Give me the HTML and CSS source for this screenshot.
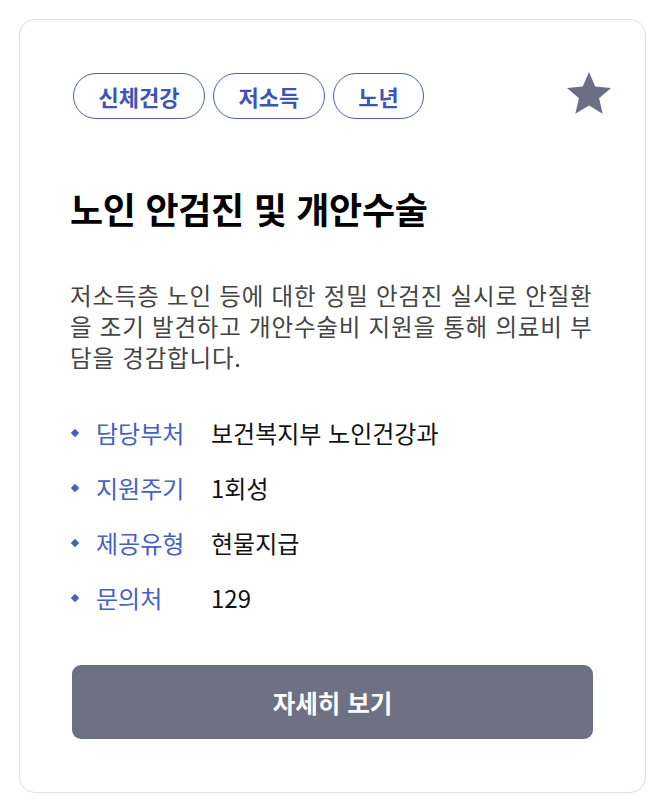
FILE: index.html
```html
<!DOCTYPE html>
<html lang="ko">
<head>
<meta charset="utf-8">
<link rel="stylesheet" href="styles.css">
</head>
<body>
<div class="page">
  <article class="card">
    <div class="card-head">
      <ul class="tags">
        <li class="tag">신체건강</li>
        <li class="tag">저소득</li>
        <li class="tag">노년</li>
      </ul>
      <button class="fav" aria-label="즐겨찾기">
        <svg viewBox="2 2.2 20 19" width="44" height="42"><path d="M12 2.2l2.85 6.6 7.15.62-5.42 4.72 1.63 7.02L12 17.4l-6.21 3.76 1.63-7.02L2 9.42l7.15-.62z" fill="#6c6f83"/></svg>
      </button>
    </div>
    <h2 class="title">노인 안검진 및 개안수술</h2>
    <p class="desc">저소득층 노인 등에 대한 정밀 안검진 실시로 안질환을 조기 발견하고 개안수술비 지원을 통해 의료비 부담을 경감합니다.</p>
    <dl class="info">
      <div class="row"><dt>담당부처</dt><dd>보건복지부 노인건강과</dd></div>
      <div class="row"><dt>지원주기</dt><dd>1회성</dd></div>
      <div class="row"><dt>제공유형</dt><dd>현물지급</dd></div>
      <div class="row"><dt>문의처</dt><dd>129</dd></div>
    </dl>
    <button class="more">자세히 보기</button>
  </article>
</div>
</body>
</html>
```

FILE: styles.css
```css
* { box-sizing: border-box; }
html, body { margin: 0; padding: 0; background: #fff; }
body { font-family: "Noto Sans CJK KR", "Noto Sans", sans-serif; }
.page { padding: 19px 19px 15px 19px; }
.card {
  border: 1px solid #dedfe3;
  border-radius: 16px;
  padding: 53px 50px 53px 50px;
  display: flex;
  flex-direction: column;
}
.card-head { display: flex; justify-content: space-between; align-items: flex-start; }
.tags { list-style: none; margin: 0; padding: 0 0 0 3px; display: flex; gap: 8px; }
.tag {
  height: 46px;
  padding: 0 24.5px;
  border: 1px solid #4a5fb4;
  border-radius: 23px;
  color: #3c55b6;
  font-size: 22px;
  font-weight: 700;
  display: flex;
  align-items: center;
}
.fav { border: 0; background: none; padding: 0; margin: -1px -16px 0 0; display: flex; }
.title {
  margin: 66px 0 0;
  font-size: 36px;
  font-weight: 700;
  color: #000;
  letter-spacing: -0.3px;
  line-height: 46px;
}
.desc {
  margin: 49px 0 0;
  font-size: 23.5px;
  line-height: 31px;
  letter-spacing: 0.8px;
  color: #444;
}
.info { margin: 44px 0 0; display: flex; flex-direction: column; gap: 23px; }
.row { display: flex; align-items: center; font-size: 24px; line-height: 32px; }
.row dt {
  width: 141px;
  color: #4760c4;
  display: flex;
  align-items: center;
  gap: 18px;
}
.row dt::before {
  content: "";
  width: 6px; height: 6px;
  background: #4760c4;
  transform: rotate(45deg);
  margin-left: 2px;
}
.row dd { margin: 0; color: #111; }
.more {
  margin: 51px 2px 0;
  height: 74px;
  border: 0;
  border-radius: 9px;
  background: #6e7084;
  color: #fff;
  font-family: inherit;
  font-size: 24.5px;
  font-weight: 700;
}
```
